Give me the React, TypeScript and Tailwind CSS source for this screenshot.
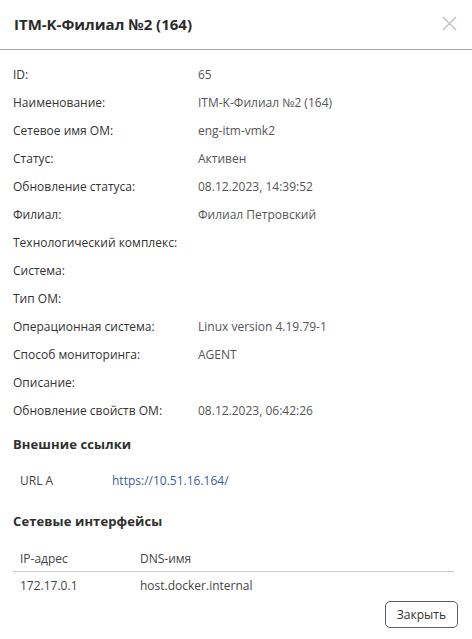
import React from "react";

const FIELDS: [string, string][] = [
  ["ID:", "65"],
  ["Наименование:", "ITM-K-Филиал №2 (164)"],
  ["Сетевое имя ОМ:", "eng-itm-vmk2"],
  ["Статус:", "Активен"],
  ["Обновление статуса:", "08.12.2023, 14:39:52"],
  ["Филиал:", "Филиал Петровский"],
  ["Технологический комплекс:", ""],
  ["Система:", ""],
  ["Тип ОМ:", ""],
  ["Операционная система:", "Linux version 4.19.79-1"],
  ["Способ мониторинга:", "AGENT"],
  ["Описание:", ""],
  ["Обновление свойств ОМ:", "08.12.2023, 06:42:26"],
];

export default function App() {
  return (
    <div
      className="w-[472px] h-[639px] bg-white overflow-hidden flex flex-col text-[12px] text-[#333]"
      style={{ fontFamily: '"Open Sans", "Noto Sans", sans-serif' }}
    >
      {/* Header */}
      <div className="h-[50px] shrink-0 flex items-center justify-between pl-[14px] pr-[15px] border-b border-[#a3a6a9]">
        <h2 className="text-[15px] font-bold text-[#2b2b2b] leading-none">ITM-K-Филиал №2 (164)</h2>
        <button className="w-[16px] h-[16px] mb-[2px] flex items-center justify-center text-[#c6c6c6]">
          <svg width="15" height="15" viewBox="0 0 15 15" fill="none" stroke="currentColor" strokeWidth="1.6">
            <path d="M1 1L14 14M14 1L1 14" />
          </svg>
        </button>
      </div>

      {/* Body */}
      <div className="flex-1 flex flex-col pt-[11px] pl-[13px] pr-[18px]">
        <div className="flex flex-col">
          {FIELDS.map(([label, value]) => (
            <div key={label} className="flex h-[28px] items-center leading-[18px]">
              <div className="w-[185px] shrink-0 text-[#333]">{label}</div>
              <div className="text-[#555]">{value}</div>
            </div>
          ))}
        </div>

        <h3 className="mt-[10px] h-[20px] flex items-center text-[13px] font-bold tracking-[0.1px] text-[#2f2f2f]">
          Внешние ссылки
        </h3>
        <div className="mt-[15px] flex h-[22px] items-center pl-[7px]">
          <div className="w-[92px] shrink-0 text-[#444]">URL A</div>
          <a className="text-[#3c5d9e]" href="#">https://10.51.16.164/</a>
        </div>

        <h3 className="mt-[20px] h-[20px] flex items-center text-[13px] font-bold tracking-[0.1px] text-[#2f2f2f]">
          Сетевые интерфейсы
        </h3>
        <div className="mt-[14px] flex flex-col">
          <div className="flex h-[26px] items-center pl-[7px] border-b border-[#c9c9c9] text-[#444]">
            <div className="w-[120px] shrink-0">IP-адрес</div>
            <div>DNS-имя</div>
          </div>
          <div className="flex h-[28px] items-center pl-[7px] text-[#444]">
            <div className="w-[120px] shrink-0">172.17.0.1</div>
            <div>host.docker.internal</div>
          </div>
        </div>

        <div className="flex justify-end mr-[-4px] mt-[1px]">
          <button className="h-[27px] px-[11px] rounded-[5px] border border-[#5a5f66] text-[#333] text-[12px]">
            Закрыть
          </button>
        </div>
      </div>
    </div>
  );
}
